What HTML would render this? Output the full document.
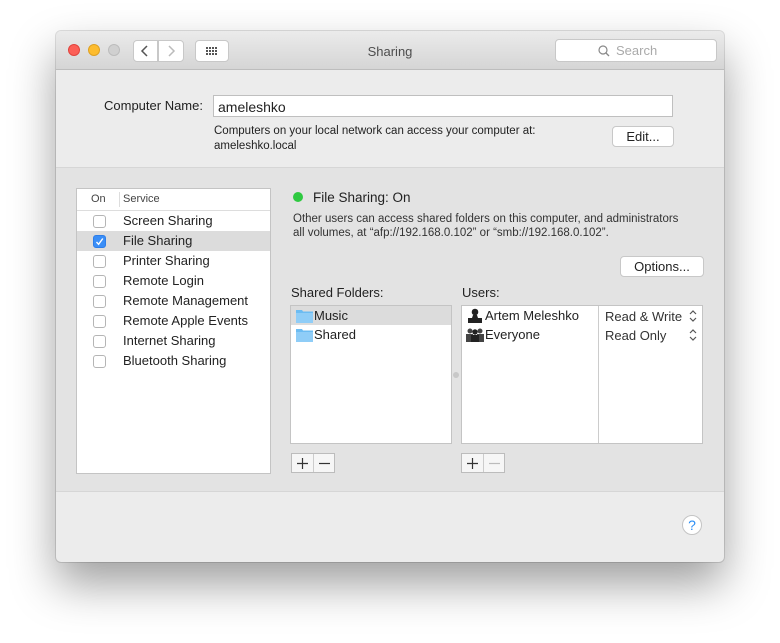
<!DOCTYPE html>
<html><head><style>
body{margin:0;width:780px;height:643px;background:#fff;font-family:"Liberation Sans",sans-serif;font-size:13px;color:#222;position:relative;overflow:hidden}
.a{position:absolute}
.win{left:56px;top:31px;width:668px;height:531px;border-radius:5px;background:#ececec;box-shadow:0 22px 45px rgba(0,0,0,.38),0 0 0 1px rgba(0,0,0,.12);overflow:hidden}
.tb{left:0;top:0;width:668px;height:38px;background:linear-gradient(#ebebeb,#d5d5d5);border-bottom:1px solid #bdbdbd}
.btn{background:#fff;border:1px solid #c8c8c8;border-radius:4px;box-sizing:border-box}
.dot{width:12px;height:12px;border-radius:50%;top:13px}
.cb{width:13px;height:13px;border:1px solid #b5b5b5;border-radius:3px;background:#fff;box-sizing:border-box;left:16px}
.row{left:0;width:193px;height:20px;line-height:20px}
.row span{position:absolute;left:46px}
</style></head><body>
<div class="a win">
 <div class="a tb">
  <div class="a dot" style="left:12px;background:#fc5f57;border:1px solid #e0443e;box-sizing:border-box"></div>
  <div class="a dot" style="left:32px;background:#fdbc2e;border:1px solid #dea123;box-sizing:border-box"></div>
  <div class="a dot" style="left:52px;background:#d0d0d0;border:1px solid #bcbcbc;box-sizing:border-box"></div>
  <div class="a btn" style="left:77px;top:9px;width:25px;height:22px;border-radius:4px 0 0 4px"><svg width="23" height="20"><path d="M13 5 L8 10 L13 15" fill="none" stroke="#555" stroke-width="1.5"/></svg></div>
  <div class="a btn" style="left:102px;top:9px;width:26px;height:22px;border-radius:0 4px 4px 0"><svg width="24" height="20"><path d="M10 5 L15 10 L10 15" fill="none" stroke="#bbb" stroke-width="1.5"/></svg></div>
  <div class="a btn" style="left:139px;top:9px;width:34px;height:22px">
   <svg width="34" height="22" style="position:absolute;left:-1px;top:-1px"><g fill="#555"><rect x="11" y="7" width="2" height="2"/><rect x="14" y="7" width="2" height="2"/><rect x="17" y="7" width="2" height="2"/><rect x="20" y="7" width="2" height="2"/><rect x="11" y="10" width="2" height="2"/><rect x="14" y="10" width="2" height="2"/><rect x="17" y="10" width="2" height="2"/><rect x="20" y="10" width="2" height="2"/><rect x="11" y="13" width="2" height="2"/><rect x="14" y="13" width="2" height="2"/><rect x="17" y="13" width="2" height="2"/><rect x="20" y="13" width="2" height="2"/></g></svg>
  </div>
  <div class="a" style="left:0;width:668px;top:13px;text-align:center;color:#4d4d4d">Sharing</div>
  <div class="a btn" style="left:499px;top:8px;width:162px;height:23px;color:#aaa;line-height:21px">
   <svg class="a" style="left:42px;top:5px" width="12" height="12"><circle cx="5" cy="5" r="4" fill="none" stroke="#888" stroke-width="1.2"/><line x1="8" y1="8" x2="11" y2="11" stroke="#888" stroke-width="1.3"/></svg>
   <span class="a" style="left:60px">Search</span></div>
 </div>
 <div class="a" style="left:48px;top:67px">Computer Name:</div>
 <div class="a" style="left:157px;top:64px;width:460px;height:22px;background:#fff;border:1px solid #bfbfbf;box-sizing:border-box;padding:3px 4px;font-size:14px">ameleshko</div>
 <div class="a" style="left:158px;top:93px;font-size:11.5px;line-height:15px">Computers on your local network can access your computer at:<br>ameleshko.local</div>
 <div class="a btn" style="left:556px;top:95px;width:62px;height:21px;text-align:center;line-height:19px">Edit...</div>
 <div class="a" style="left:0;top:136px;width:668px;height:323px;background:#e3e3e3;border-top:1px solid #d6d6d6;border-bottom:1px solid #d6d6d6"></div>
 <div class="a" style="left:20px;top:157px;width:195px;height:286px;background:#fff;border:1px solid #c4c4c4;box-sizing:border-box">
  <div class="a" style="left:0;top:0;width:193px;height:21px;border-bottom:1px solid #ddd;font-size:11px;color:#444;line-height:21px"><span class="a" style="left:14px">On</span><span class="a" style="left:42px;top:3px;height:15px;border-left:1px solid #ddd"></span><span class="a" style="left:46px">Service</span></div>
  <div class="a row" style="top:22px"><div class="a cb" style="top:4px"></div><span>Screen Sharing</span></div>
  <div class="a row" style="top:42px;background:#dcdcdc"><div class="a cb" style="top:4px;background:#3a8ef7;border-color:#2d7de8"><svg width="11" height="11" style="position:absolute;left:0;top:0"><path d="M2.5 6 L4.6 8.3 L8.8 2.5" fill="none" stroke="#fff" stroke-width="1.4"/></svg></div><span>File Sharing</span></div>
  <div class="a row" style="top:62px"><div class="a cb" style="top:4px"></div><span>Printer Sharing</span></div>
  <div class="a row" style="top:82px"><div class="a cb" style="top:4px"></div><span>Remote Login</span></div>
  <div class="a row" style="top:102px"><div class="a cb" style="top:4px"></div><span>Remote Management</span></div>
  <div class="a row" style="top:122px"><div class="a cb" style="top:4px"></div><span>Remote Apple Events</span></div>
  <div class="a row" style="top:142px"><div class="a cb" style="top:4px"></div><span>Internet Sharing</span></div>
  <div class="a row" style="top:162px"><div class="a cb" style="top:4px"></div><span>Bluetooth Sharing</span></div>
 </div>
 <div class="a" style="left:237px;top:161px;width:10px;height:10px;border-radius:50%;background:#2ec940"></div>
 <div class="a" style="left:257px;top:159px;font-size:13.5px">File Sharing: On</div>
 <div class="a" style="left:237px;top:181px;font-size:11.5px;line-height:14px;color:#333">Other users can access shared folders on this computer, and administrators<br>all volumes, at “afp://192.168.0.102” or “smb://192.168.0.102”.</div>
 <div class="a btn" style="left:564px;top:225px;width:84px;height:21px;text-align:center;line-height:19px">Options...</div>
 <div class="a" style="left:235px;top:254px">Shared Folders:</div>
 <div class="a" style="left:406px;top:254px">Users:</div>
 <div class="a" style="left:234px;top:274px;width:162px;height:139px;background:#fff;border:1px solid #c4c4c4;box-sizing:border-box">
  <div class="a" style="left:0;top:0;width:160px;height:19px;background:#dcdcdc"></div>
  <svg class="a" style="left:5px;top:3px" width="17" height="14"><path d="M0 1h6l1 1.5h10V14H0z" fill="#6cbcf2"/><rect x="0" y="4" width="17" height="10" fill="#8fcdf7"/></svg>
  <div class="a" style="left:23px;top:2px">Music</div>
  <svg class="a" style="left:5px;top:22px" width="17" height="14"><path d="M0 1h6l1 1.5h10V14H0z" fill="#6cbcf2"/><rect x="0" y="4" width="17" height="10" fill="#8fcdf7"/></svg>
  <div class="a" style="left:23px;top:21px">Shared</div>
 </div>
 <div class="a" style="left:397px;top:341px;width:6px;height:6px;border-radius:50%;background:#c8c8c8"></div>
 <div class="a" style="left:405px;top:274px;width:242px;height:139px;background:#fff;border:1px solid #c4c4c4;box-sizing:border-box">
  <div class="a" style="left:136px;top:0;height:137px;border-left:1px solid #ccc"></div>
  <svg class="a" style="left:5px;top:2px" width="16" height="15"><circle cx="8" cy="4" r="3.3" fill="#222"/><path d="M6 7h4l1 3h4v5H1v-5h4z" fill="#222"/></svg>
  <div class="a" style="left:23px;top:2px">Artem Meleshko</div>
  <svg class="a" style="left:4px;top:21px" width="18" height="15"><g fill="#444"><circle cx="4" cy="4" r="2.5"/><circle cx="14" cy="4" r="2.5"/><rect x="0" y="7" width="7" height="8"/><rect x="11" y="7" width="7" height="8"/><circle cx="9" cy="5" r="2.7" fill="#222"/><rect x="5" y="8" width="8" height="7" fill="#222"/></g></svg>
  <div class="a" style="left:23px;top:21px">Everyone</div>
  <div class="a" style="left:143px;top:3px;color:#333">Read &amp; Write</div>
  <div class="a" style="left:143px;top:22px;color:#333">Read Only</div>
  <svg class="a" style="left:226px;top:3px" width="10" height="14"><path d="M2 5 L5 2 L8 5 M2 9 L5 12 L8 9" fill="none" stroke="#555" stroke-width="1.2"/></svg>
  <svg class="a" style="left:226px;top:22px" width="10" height="14"><path d="M2 5 L5 2 L8 5 M2 9 L5 12 L8 9" fill="none" stroke="#555" stroke-width="1.2"/></svg>
 </div>
 <div class="a" style="left:235px;top:422px;width:44px;height:20px;border:1px solid #bcbcbc;background:#f6f6f6;box-sizing:border-box">
  <div class="a" style="left:21px;top:0;height:18px;border-left:1px solid #ccc"></div>
  <svg class="a" style="left:4px;top:3px" width="13" height="13"><path d="M6.5 1v11M1 6.5h11" stroke="#333" stroke-width="1.2"/></svg>
  <svg class="a" style="left:26px;top:3px" width="13" height="13"><path d="M1 6.5h11" stroke="#333" stroke-width="1.2"/></svg></div>
 <div class="a" style="left:405px;top:422px;width:44px;height:20px;border:1px solid #bcbcbc;background:#f6f6f6;box-sizing:border-box">
  <div class="a" style="left:21px;top:0;height:18px;border-left:1px solid #ccc"></div>
  <svg class="a" style="left:4px;top:3px" width="13" height="13"><path d="M6.5 1v11M1 6.5h11" stroke="#333" stroke-width="1.2"/></svg>
  <svg class="a" style="left:26px;top:3px" width="13" height="13"><path d="M1 6.5h11" stroke="#bbb" stroke-width="1.2"/></svg></div>
 <div class="a" style="left:626px;top:484px;width:20px;height:20px;border-radius:50%;background:#fff;border:1px solid #c4c4c4;box-sizing:border-box;text-align:center;line-height:18px;color:#2b8ef5;font-size:14px">?</div>
</div>
</body></html>
